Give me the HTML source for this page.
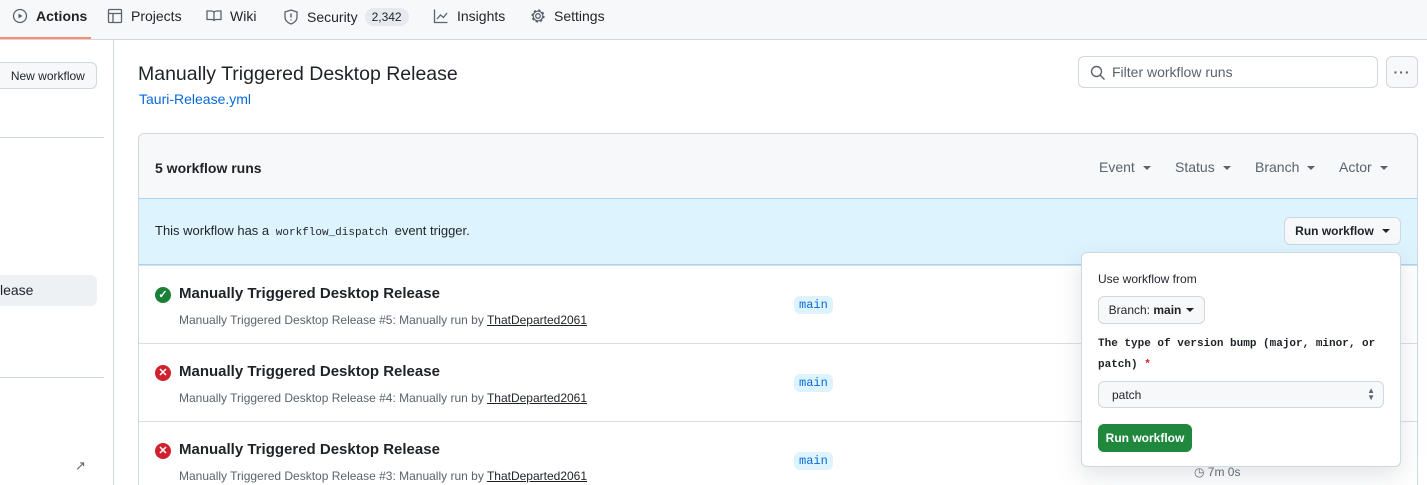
<!DOCTYPE html>
<html><head><style>
*{box-sizing:border-box;margin:0;padding:0}
html,body{width:1427px;height:485px;overflow:hidden}
body{background:#fff;font-family:"Liberation Sans",sans-serif;color:#1f2328;position:relative;font-size:14px}
.a{position:absolute}
.nav{left:0;top:0;width:1427px;height:40px;background:#f6f8fa;border-bottom:1px solid #d0d7de}
.ni{position:absolute;top:8px;font-size:14px;color:#1f2328;display:flex;align-items:center;gap:8px}
.btn{border:1px solid #d0d7de;background:#f6f8fa;border-radius:6px;font-size:12px;font-weight:bold;display:flex;align-items:center;justify-content:center}
.mono{font-family:"Liberation Mono",monospace}
.row{left:139px;width:1278px;height:78px;border-top:1px solid #d8dee4;overflow:hidden}
.ttl{position:absolute;left:40px;top:19px;font-size:15px;font-weight:bold}
.sub{position:absolute;left:40px;top:47px;font-size:12px;color:#59636e}
.sub u{color:#1f2328}
.tag{position:absolute;left:655px;top:30px;background:#ddf4ff;color:#0969da;font-family:"Liberation Mono",monospace;font-size:12px;padding:2px 5px;border-radius:6px}
.ic{position:absolute;left:16px;top:21px;width:16px;height:16px;border-radius:50%;color:#fff;font-size:11px;text-align:center;line-height:16px;font-weight:bold}
.car{display:inline-block;border-left:4px solid transparent;border-right:4px solid transparent;border-top:4px solid #59636e;margin-left:8px;vertical-align:middle}
</style></head><body>
<div class="a nav">
 <div class="ni" style="left:12px"><svg width="16" height="16" viewBox="0 0 16 16"><circle cx="8" cy="8" r="6.5" fill="none" stroke="#59636e" stroke-width="1.3"/><path d="M6.5 5.5v5l4-2.5z" fill="#59636e"/></svg><b>Actions</b></div>
 <div class="a" style="left:0;top:37px;width:91px;height:2px;background:#fd8c73"></div>
 <div class="ni" style="left:107px"><svg width="16" height="16" viewBox="0 0 16 16"><rect x="1.5" y="1.5" width="13" height="13" rx="1" fill="none" stroke="#59636e" stroke-width="1.3"/><path d="M1.5 5.5h13M6 5.5v9" stroke="#59636e" stroke-width="1.3"/></svg>Projects</div>
 <div class="ni" style="left:206px"><svg width="16" height="16" viewBox="0 0 16 16"><path d="M1 3h4.5c1.5 0 2.5 1 2.5 2v8c0-1-1-1.5-2-1.5H1zM15 3h-4.5C9 3 8 4 8 5v8c0-1 1-1.5 2-1.5h5z" fill="none" stroke="#59636e" stroke-width="1.3"/></svg>Wiki</div>
 <div class="ni" style="left:283px"><svg width="16" height="16" viewBox="0 0 16 16"><path d="M8 1l6 2v5c0 3.5-3 6-6 7-3-1-6-3.5-6-7V3z" fill="none" stroke="#59636e" stroke-width="1.3"/><path d="M8 4.5v4M8 10.5v1" stroke="#59636e" stroke-width="1.5"/></svg>Security<span style="background:#e6eaef;border-radius:10px;padding:2px 7px;font-size:12px;margin-left:-1px">2,342</span></div>
 <div class="ni" style="left:433px"><svg width="16" height="16" viewBox="0 0 16 16"><path d="M1.5 1.5v13h13M4 11l3.5-4 3 2.5L14 5" fill="none" stroke="#59636e" stroke-width="1.3"/></svg>Insights</div>
 <div class="ni" style="left:530px"><svg width="16" height="16" viewBox="0 0 16 16"><circle cx="8" cy="8" r="2.3" fill="none" stroke="#59636e" stroke-width="1.3"/><circle cx="8" cy="8" r="5.8" fill="none" stroke="#59636e" stroke-width="1.6" stroke-dasharray="2.3 2.25"/><circle cx="8" cy="8" r="4.8" fill="none" stroke="#59636e" stroke-width="1.2"/></svg>Settings</div>
</div>
<div class="a" style="left:113px;top:40px;width:1px;height:445px;background:#d0d7de"></div>
<div class="a btn" style="left:-8px;top:62px;width:105px;height:27px;font-weight:normal;color:#1f2328">&nbsp;&nbsp;New workflow</div>
<div class="a" style="left:0;top:137px;width:104px;height:1px;background:#d0d7de"></div>
<div class="a" style="left:0;top:275px;width:97px;height:31px;background:#eef1f4;border-radius:0 6px 6px 0;padding:7px 0 0 0;font-size:14px">lease</div>
<div class="a" style="left:0;top:377px;width:104px;height:1px;background:#d0d7de"></div>
<div class="a" style="left:75px;top:458px;font-size:13px;color:#59636e">↗</div>

<div class="a" style="left:138px;top:63px;font-size:19.5px">Manually Triggered Desktop Release</div>
<div class="a" style="left:139px;top:91px;font-size:14px;color:#0969da">Tauri-Release.yml</div>
<div class="a" style="left:1078px;top:56px;width:300px;height:32px;border:1px solid #d0d7de;border-radius:6px;font-size:14px;color:#59636e;padding:7px 0 0 33px">Filter workflow runs
 <svg class="a" style="left:11px;top:8px" width="16" height="16" viewBox="0 0 16 16"><circle cx="6.5" cy="6.5" r="5" fill="none" stroke="#59636e" stroke-width="1.4"/><path d="M10 10l4.5 4.5" stroke="#59636e" stroke-width="1.4"/></svg></div>
<div class="a btn" style="left:1386px;top:56px;width:32px;height:32px;color:#59636e;font-size:14px;letter-spacing:1px">···</div>

<div class="a" style="left:138px;top:133px;width:1280px;height:352px;border:1px solid #d0d7de;border-bottom:none;border-radius:6px 6px 0 0;overflow:hidden">
 <div class="a" style="left:0;top:0;width:1280px;height:65px;background:#f6f8fa"></div>
 <div class="a" style="left:16px;top:26px;font-size:14px;font-weight:bold">5 workflow runs</div>
 <div class="a" style="left:960px;top:25px;font-size:14px;color:#59636e">Event<span class="car"></span></div>
 <div class="a" style="left:1036px;top:25px;font-size:14px;color:#59636e">Status<span class="car"></span></div>
 <div class="a" style="left:1116px;top:25px;font-size:14px;color:#59636e">Branch<span class="car"></span></div>
 <div class="a" style="left:1200px;top:25px;font-size:14px;color:#59636e">Actor<span class="car"></span></div>
 <div class="a" style="left:0;top:64px;width:1280px;height:67px;background:#ddf4ff;border-top:1px solid #a8d4f5;border-bottom:1px solid #a8d4f5"></div>
 <div class="a" style="left:16px;top:89px;font-size:13px">This workflow has a <span class="mono" style="font-size:11px;padding:0 3px">workflow_dispatch</span> event trigger.</div>
 <div class="a btn" style="left:1145px;top:83px;width:117px;height:28px">Run workflow<span class="car" style="border-top-color:#1f2328"></span></div>
</div>
<div class="a row" style="top:265px"><div class="ic" style="background:#1a7f37">✓</div><div class="ttl">Manually Triggered Desktop Release</div><div class="sub">Manually Triggered Desktop Release #5: Manually run by <u>ThatDeparted2061</u></div><div class="tag">main</div></div>
<div class="a row" style="top:343px"><div class="ic" style="background:#cf222e">✕</div><div class="ttl">Manually Triggered Desktop Release</div><div class="sub">Manually Triggered Desktop Release #4: Manually run by <u>ThatDeparted2061</u></div><div class="tag">main</div></div>
<div class="a row" style="top:421px;height:64px"><div class="ic" style="background:#cf222e">✕</div><div class="ttl">Manually Triggered Desktop Release</div><div class="sub">Manually Triggered Desktop Release #3: Manually run by <u>ThatDeparted2061</u></div><div class="tag">main</div></div>
<div class="a" style="left:1194px;top:465px;font-size:12px;color:#59636e">◷ 7m 0s</div>

<div class="a" style="left:1081px;top:252px;width:320px;height:215px;background:#fff;border:1px solid #d0d7de;border-radius:6px;box-shadow:0 8px 24px rgba(140,149,159,.25)">
 <div class="a" style="left:16px;top:19px;font-size:12px">Use workflow from</div>
 <div class="a btn" style="left:16px;top:43px;width:107px;height:28px;font-weight:normal;font-size:12px">Branch:&nbsp;<b>main</b><span class="car" style="border-top-color:#1f2328;margin-left:5px"></span></div>
 <div class="a mono" style="left:16px;top:81px;font-size:11px;font-weight:bold;line-height:21px;width:290px">The type of version bump (major, minor, or patch) <span style="color:#cf222e">*</span></div>
 <div class="a" style="left:16px;top:128px;width:286px;height:27px;border:1px solid #d0d7de;border-radius:6px;background:#f6f8fa;font-size:12px;padding:6px 0 0 13px">patch<span class="a" style="right:8px;top:5px;font-size:8px;line-height:7px;color:#59636e">▲<br>▼</span></div>
 <div class="a" style="left:16px;top:171px;width:94px;height:28px;background:#1f883d;border-radius:6px;color:#fff;font-size:12px;font-weight:bold;text-align:center;line-height:28px">Run workflow</div>
</div>
</body></html>
